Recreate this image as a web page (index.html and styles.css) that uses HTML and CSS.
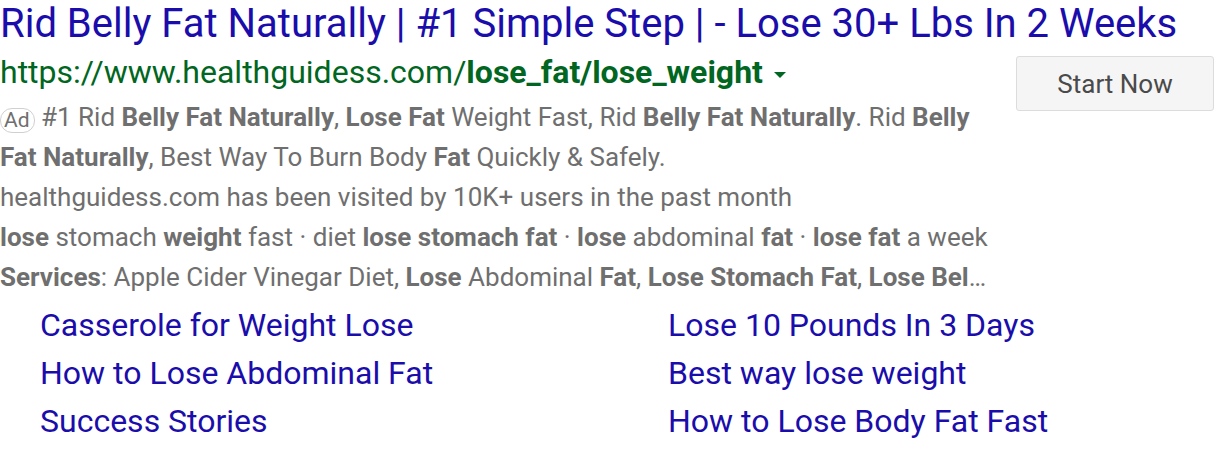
FILE: index.html
```html
<!DOCTYPE html>
<html>
<head>
<meta charset="utf-8">
<link rel="stylesheet" href="styles.css">
</head>
<body>
<div class="ad">
  <h3 class="title">Rid Belly Fat Naturally | #1 Simple Step | - Lose 30+ Lbs In 2 Weeks</h3>
  <div class="main">
    <div class="body">
      <div class="url">https://www.healthguidess.com/<b>lose_fat/lose_weight</b><span class="caret"></span></div>
      <div class="desc"><span class="badge">Ad</span> #1 Rid <b>Belly Fat Naturally</b>, <b>Lose Fat</b> Weight Fast, Rid <b>Belly Fat Naturally</b>. Rid <b>Belly</b><br><b>Fat Naturally</b>, Best Way To Burn Body <b>Fat</b> Quickly &amp; Safely.</div>
      <div class="line">healthguidess.com has been visited by 10K+ users in the past month</div>
      <div class="line"><b>lose</b> stomach <b>weight</b> fast · diet <b>lose stomach fat</b> · <b>lose</b> abdominal <b>fat</b> · <b>lose fat</b> a week</div>
      <div class="line"><b>Services</b>: Apple Cider Vinegar Diet, <b>Lose</b> Abdominal <b>Fat</b>, <b>Lose Stomach Fat</b>, <b>Lose Bel</b>…</div>
    </div>
    <button class="cta">Start Now</button>
  </div>
  <div class="links">
    <a>Casserole for Weight Lose</a>
    <a>Lose 10 Pounds In 3 Days</a>
    <a>How to Lose Abdominal Fat</a>
    <a>Best way lose weight</a>
    <a>Success Stories</a>
    <a>How to Lose Body Fat Fast</a>
  </div>
</div>
</body>
</html>
```

FILE: styles.css
```css
html, body {
  margin: 0;
  padding: 0;
  background: #fff;
}
body {
  font-family: Roboto, "Liberation Sans", Arial, sans-serif;
}
.title {
  margin: 0;
  font-weight: 400;
  font-size: 40px;
  line-height: 48px;
  color: #1a0dab;
  white-space: nowrap;
}
.main {
  display: flex;
  align-items: flex-start;
}
.body {
  flex: 1;
}
.url {
  font-size: 32px;
  line-height: 49px;
  color: #006621;
  white-space: nowrap;
}
.url b {
  font-weight: 700;
}
.caret {
  display: inline-block;
  width: 0;
  height: 0;
  margin-left: 11px;
  vertical-align: middle;
  border-left: 6px solid transparent;
  border-right: 6px solid transparent;
  border-top: 6px solid #006621;
}
.desc, .line {
  font-size: 26px;
  line-height: 40px;
  color: #6f6f6f;
  white-space: nowrap;
}
.desc b, .line b {
  font-weight: 700;
}
.badge {
  display: inline-block;
  box-sizing: border-box;
  height: 25px;
  line-height: 23px;
  padding: 0 4px 0 3px;
  border: 1px solid #d0d0d0;
  border-radius: 12px;
  font-size: 21px;
  vertical-align: -1px;
  color: #6f6f6f;
}
.cta {
  box-sizing: border-box;
  width: 198px;
  height: 55px;
  margin: 8px 2px 0 0;
  background: #f5f5f5;
  border: 1px solid #dcdcdc;
  border-radius: 3px;
  font-family: Roboto, "Liberation Sans", Arial, sans-serif;
  font-size: 26px;
  color: #4a4a4a;
  padding: 0;
}
.links {
  display: grid;
  grid-template-columns: 628px 1fr;
  padding: 4px 0 0 40px;
}
.links a {
  font-size: 32px;
  line-height: 48px;
  color: #1a0dab;
  white-space: nowrap;
}
```
